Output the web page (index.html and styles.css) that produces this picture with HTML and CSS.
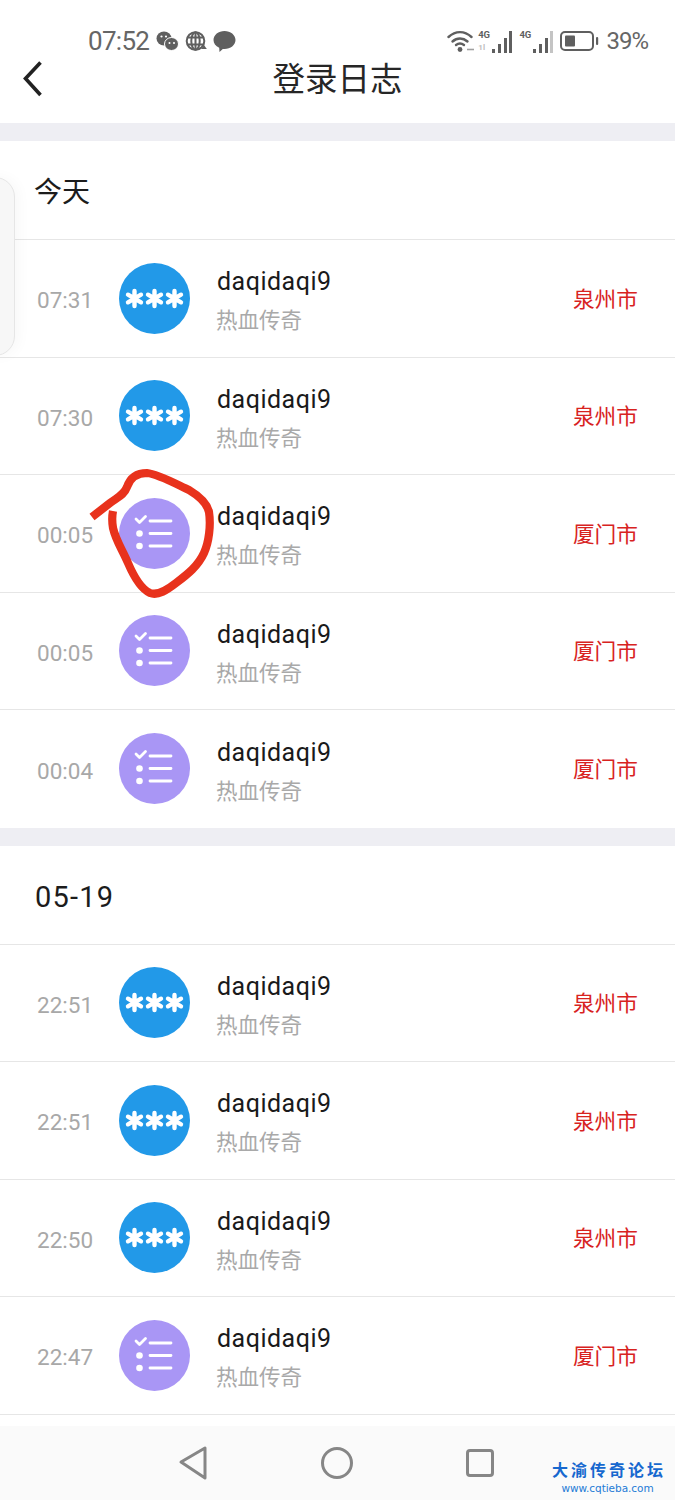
FILE: index.html
```html
<!DOCTYPE html>
<html lang="zh-CN">
<head>
<meta charset="utf-8">
<title>登录日志</title>
<link rel="stylesheet" href="styles.css">
</head>
<body>
<svg class="defs" width="0" height="0" aria-hidden="true">
  <symbol id="i-pass" viewBox="0 0 71 71">
    <circle cx="35.500" cy="35.500" r="35.500" fill="#2299e8"/>
    <g stroke="#fff" stroke-width="4.400" stroke-linecap="round" fill="none">
      <path d="M15.500 28v15M9 31.700l13 7.600M9 39.300l13-7.600"/>
      <path d="M35.500 28v15M29 31.700l13 7.600M29 39.300l13-7.600"/>
      <path d="M55.500 28v15M49 31.700l13 7.600M49 39.300l13-7.600"/>
    </g>
  </symbol>
  <symbol id="i-list" viewBox="0 0 71 71">
    <circle cx="35.500" cy="35.500" r="35.500" fill="#a996f5"/>
    <g stroke="#fff" stroke-width="2.800" stroke-linecap="round" stroke-linejoin="round" fill="none">
      <path d="M17 21l3.500 3.500 6-6"/>
      <path d="M31 23h21M31 35.500h21M31 48h21"/>
    </g>
    <circle cx="20.500" cy="35.500" r="3.300" fill="#fff"/>
    <circle cx="20.500" cy="48" r="3.300" fill="#fff"/>
  </symbol>
</svg>

<div class="page">
  <header class="top">
    <div class="status">
      <div class="status-left">
        <span class="clock">07:52</span>
        <svg width="23" height="22" viewBox="0 0 23 22"><ellipse cx="8" cy="8.500" rx="7.500" ry="7" fill="#5f5f5f"/><ellipse cx="15.500" cy="14" rx="7" ry="6.500" fill="#5f5f5f" stroke="#fff" stroke-width="1"/><circle cx="5.500" cy="6.500" r="1.100" fill="#fff"/><circle cx="10" cy="6.500" r="1.100" fill="#fff"/><circle cx="13.500" cy="13" r="1" fill="#fff"/><circle cx="18" cy="13" r="1" fill="#fff"/></svg>
        <svg width="22" height="22" viewBox="0 0 22 22"><g fill="none" stroke="#5f5f5f" stroke-width="2"><circle cx="10.500" cy="11" r="8.800"/><ellipse cx="10.500" cy="11" rx="4.200" ry="8.800"/><path d="M2 7.500h17M2 14.500h17M10.500 2v18"/></g><path d="M19 15l2.800 4h-5.600z" fill="#5f5f5f"/></svg>
        <svg width="23" height="24" viewBox="0 0 23 24"><path d="M11.500 2c6 0 11 3.900 11 9s-5 9-11 9c-.6 0-1.200 0-1.700-.1L6.500 23l-.3-4.300C2.500 17.100.5 14.300.5 11c0-5.100 5-9 11-9z" fill="#5f5f5f"/></svg>
      </div>
      <div class="status-right">
        <svg class="wifi" width="29" height="24" viewBox="0 0 29 24"><g fill="none" stroke="#5f5f5f" stroke-width="2.400" stroke-linecap="round"><path d="M1.500 8c7-6.500 16-6.500 23 0"/><path d="M5.500 12.500c4.500-4 10.500-4 15 0"/><path d="M9 16c2.500-2 5.500-2 8 0"/></g><circle cx="13" cy="20.500" r="2.400" fill="#5f5f5f"/><path d="M20 20.500h7" stroke="#a0a0a0" stroke-width="1.600"/></svg>
        <div class="sim">
          <div class="net"><span class="net-main">4G</span><span class="net-dim">1l</span></div>
          <span class="bars"><i class="b1"></i><i class="b2"></i><i class="b3"></i><i class="b4"></i></span>
        </div>
        <div class="sim">
          <div class="net"><span class="net-main">4G</span></div>
          <span class="bars"><i class="b1"></i><i class="b2"></i><i class="b3"></i><i class="b4 dim"></i></span>
        </div>
        <svg class="batt" width="39" height="22" viewBox="0 0 39 22"><rect x="1" y="2" width="32" height="18" rx="4" fill="none" stroke="#5f5f5f" stroke-width="2"/><rect x="5" y="5.500" width="10" height="11" rx="1" fill="#5f5f5f"/><rect x="36" y="7" width="2.200" height="8" rx="1" fill="#5f5f5f"/></svg>
        <span class="pct">39%</span>
      </div>
    </div>
    <div class="titlebar">
      <svg class="back" width="22" height="38" viewBox="0 0 22 38"><path d="M19.500 2.500L4.500 18.500 19.500 35" fill="none" stroke="#222" stroke-width="3.600"/></svg>
      <h1 class="title">登录日志</h1>
    </div>
  </header>

  <section class="group">
    <h2 class="group-title zh">今天</h2>
    <div class="row"><span class="time">07:31</span><svg class="avatar"><use href="#i-pass"/></svg><div class="info"><span class="name">daqidaqi9</span><span class="sub">热血传奇</span></div><span class="city">泉州市</span></div>
    <div class="row"><span class="time">07:30</span><svg class="avatar"><use href="#i-pass"/></svg><div class="info"><span class="name">daqidaqi9</span><span class="sub">热血传奇</span></div><span class="city">泉州市</span></div>
    <div class="row"><span class="time">00:05</span><svg class="avatar"><use href="#i-list"/></svg><div class="info"><span class="name">daqidaqi9</span><span class="sub">热血传奇</span></div><span class="city">厦门市</span></div>
    <div class="row"><span class="time">00:05</span><svg class="avatar"><use href="#i-list"/></svg><div class="info"><span class="name">daqidaqi9</span><span class="sub">热血传奇</span></div><span class="city">厦门市</span></div>
    <div class="row last"><span class="time">00:04</span><svg class="avatar"><use href="#i-list"/></svg><div class="info"><span class="name">daqidaqi9</span><span class="sub">热血传奇</span></div><span class="city">厦门市</span></div>
  </section>

  <section class="group">
    <h2 class="group-title num">05-19</h2>
    <div class="row"><span class="time">22:51</span><svg class="avatar"><use href="#i-pass"/></svg><div class="info"><span class="name">daqidaqi9</span><span class="sub">热血传奇</span></div><span class="city">泉州市</span></div>
    <div class="row"><span class="time">22:51</span><svg class="avatar"><use href="#i-pass"/></svg><div class="info"><span class="name">daqidaqi9</span><span class="sub">热血传奇</span></div><span class="city">泉州市</span></div>
    <div class="row"><span class="time">22:50</span><svg class="avatar"><use href="#i-pass"/></svg><div class="info"><span class="name">daqidaqi9</span><span class="sub">热血传奇</span></div><span class="city">泉州市</span></div>
    <div class="row"><span class="time">22:47</span><svg class="avatar"><use href="#i-list"/></svg><div class="info"><span class="name">daqidaqi9</span><span class="sub">热血传奇</span></div><span class="city">厦门市</span></div>
  </section>

  <div class="spacer"></div>
  <nav class="navbar">
    <svg width="30" height="36" viewBox="0 0 30 36"><path d="M3 17L27 3v30z" fill="none" stroke="#868686" stroke-width="3" stroke-linejoin="round"/></svg>
    <svg width="32" height="32" viewBox="0 0 32 32"><circle cx="16" cy="16" r="14.500" fill="none" stroke="#868686" stroke-width="3"/></svg>
    <svg width="28" height="28" viewBox="0 0 28 28"><rect x="1.500" y="1.500" width="25" height="25" rx="2.500" fill="none" stroke="#868686" stroke-width="3"/></svg>
  </nav>

  <div class="handle"></div>
  <svg class="scribble" width="135" height="140" viewBox="85 465 135 140"><path d="M92 517L110 503C118 497 124 495 127 487C130 478 137 473 147 473C158 474 176 484 189 490C199 496 207 503 209 512C211 525 209 542 204 553C198 566 188 574 176 583C167 590 158 596 150 593C141 589 134 577 128 563C122 549 116 541 113 528C112 522 112 516 113 511" fill="none" stroke="#e8321c" stroke-width="8.200" stroke-linejoin="round"/></svg>
  <div class="mark">
    <span class="mark-zh">大渝传奇论坛</span>
    <span class="mark-url">www.cqtieba.com</span>
  </div>
</div>
</body>
</html>
```
FILE: styles.css
```css
* { box-sizing: border-box; }
html, body { margin: 0; padding: 0; }
body {
  width: 675px;
  height: 1500px;
  overflow: hidden;
  background: #fff;
  font-family: Roboto, "Noto Sans CJK SC", sans-serif;
}
.defs { position: absolute; }
.page { position: relative; width: 675px; height: 1500px; overflow: hidden; }

.top { height: 123px; padding-top: 24px; background: #fff; }
.status { height: 34px; display: flex; justify-content: space-between; align-items: center; padding: 0 27px 0 88px; }
.status-left, .status-right { display: flex; align-items: center; }
.status-left { gap: 6px; }
.status-right { gap: 7px; }
.clock { font-size: 26px; color: #666; margin-right: 1px; letter-spacing: -.7px; }
.pct { font-size: 24px; color: #666; letter-spacing: -1px; }
.wifi { margin-right: -5px; }
.sim { display: flex; align-items: flex-end; height: 24px; gap: 1px; }
.net { width: 13px; height: 24px; display: flex; flex-direction: column; justify-content: space-between; }
.net-main { font-size: 9.500px; font-weight: 700; color: #5f5f5f; line-height: 12px; letter-spacing: -.2px; }
.net-dim { font-size: 8px; font-weight: 700; color: #bdbdbd; line-height: 10px; }
.bars { display: flex; align-items: flex-end; gap: 2.700px; }
.bars i { display: block; width: 3px; background: #5f5f5f; }
.bars .b1 { height: 4px; }
.bars .b2 { height: 9px; }
.bars .b3 { height: 15px; }
.bars .b4 { height: 22px; }
.bars .dim { background: #c4c4c4; }

.titlebar { position: relative; height: 44px; display: flex; align-items: flex-start; justify-content: center; }
.back { position: absolute; left: 21px; top: 2px; }
.title { margin: -3px 0 0; font-size: 32.500px; font-weight: 400; color: #262626; font-family: "Noto Sans CJK SC", sans-serif; line-height: 44px; }

.group { border-top: 18px solid #eeeef3; }
.group-title {
  margin: 0;
  height: 99px;
  padding-left: 34px;
  border-bottom: 1px solid #e6e6e6;
  font-size: 28px;
  font-weight: 400;
  color: #1c1c1c;
  line-height: 98px;
}
.group-title.zh { font-family: "Noto Sans CJK SC", sans-serif; }
.group-title.num { padding-left: 35px; font-size: 29px; letter-spacing: 1.200px; line-height: 102px; }

.row {
  height: 117.500px;
  display: flex;
  align-items: center;
  padding: 0 37px 0 36px;
  border-bottom: 1px solid #e6e6e6;
}
.row.last { border-bottom: 0; }
.time { width: 83px; padding-left: 1px; margin-top: 4px; font-size: 22.500px; color: #a8a8a8; }
.avatar { width: 71px; height: 71px; flex: none; }
.info { flex: 1; margin-left: 27px; padding-top: 4px; display: flex; flex-direction: column; gap: 6px; }
.name { font-size: 25px; line-height: 31px; color: #1a1a1a; letter-spacing: .5px; }
.sub { font-size: 21.500px; line-height: 31px; color: #a9a9a9; font-family: "Noto Sans CJK SC", sans-serif; margin-left: -1px; }
.city { margin-bottom: 2px; font-size: 21.700px; color: #d8231f; font-family: "Noto Sans CJK SC", sans-serif; }

.spacer { height: 11px; background: #fff; }
.navbar {
  height: 76px;
  background: #fafafa;
  display: flex;
  align-items: center;
  gap: 113px;
  padding: 0 0 2px 178px;
}

.handle {
  position: absolute;
  left: -30px;
  top: 177px;
  width: 45px;
  height: 179px;
  border: 1px solid #e6e6e6;
  border-radius: 20px;
  background: #f7f7f7;
  box-shadow: 4px 0 14px rgba(0,0,0,.03);
}
.scribble { position: absolute; left: 85px; top: 465px; }
.mark { position: absolute; left: 545px; top: 1457px; width: 125px; display: flex; flex-direction: column; align-items: center; }
.mark-zh { font-size: 16px; line-height: 24px; font-weight: 700; color: #1668cf; letter-spacing: 3px; margin-right: -3px; font-family: "Noto Sans CJK SC", sans-serif; }
.mark-url { font-size: 10.500px; line-height: 14px; color: #1f7ad6; font-family: "DejaVu Sans", sans-serif; letter-spacing: -.05px; }
```
